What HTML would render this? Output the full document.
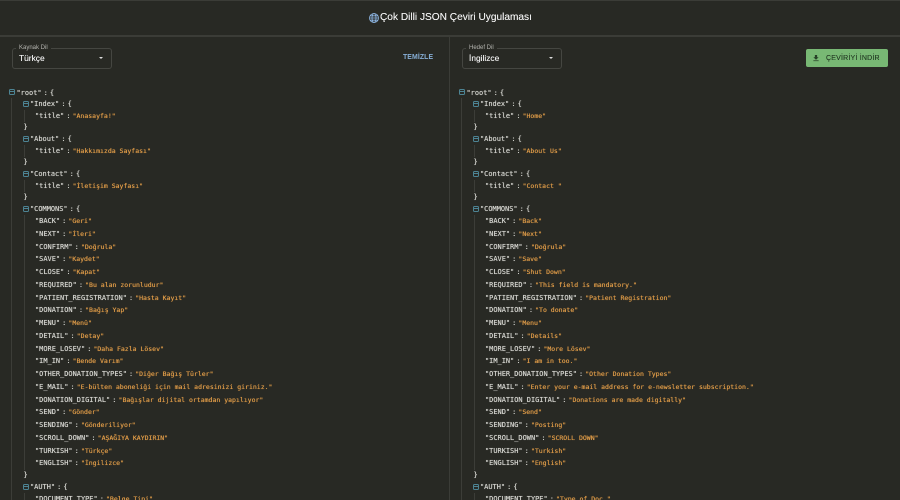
<!DOCTYPE html>
<html lang="tr"><head><meta charset="utf-8"><title>Çok Dilli JSON Çeviri Uygulaması</title>
<style>
html,body{margin:0;padding:0;width:900px;height:500px;overflow:hidden;background:#282924}
body{position:relative;font-family:"Liberation Sans",sans-serif;color:#fff}
.hl{position:absolute;left:0;width:900px;height:2px;background:#3b3c37}
.title{position:absolute;left:380px;top:10.5px;font-size:10.15px;line-height:14px;color:#f0f0f0;white-space:nowrap;text-shadow:0 0 .3px #f0f0f0}
.globe{position:absolute;left:369px;top:13px}
.div{position:absolute;left:449px;top:36px;width:1px;height:464px;background:#3b3c37}
.p{position:absolute;top:0;width:450px;height:500px;overflow:hidden}
.sel{position:absolute;left:12px;top:48px;width:98px;height:19px;border:1px solid #454641;border-radius:3px}
.lab{position:absolute;left:16px;top:44.5px;padding:0 3px;background:#282924;font-size:6px;line-height:7px;color:#b5b5b0;white-space:nowrap}
.val{position:absolute;left:19px;top:52px;font-size:8.4px;line-height:12px;color:#f0f0f0;white-space:nowrap;text-shadow:0 0 .3px #f0f0f0}
.arr{position:absolute;left:99px;top:57px;width:0;height:0;border-left:2.6px solid transparent;border-right:2.6px solid transparent;border-top:2.8px solid #ddd}
.clr{position:absolute;left:403px;top:53px;font-size:6.9px;line-height:10px;color:#86aed6;white-space:nowrap;font-weight:bold;letter-spacing:.1px}
.btn{position:absolute;left:356px;top:49px;width:82px;height:18px;border-radius:2px;background:#78b874}
.btn span{position:absolute;left:20px;top:4.5px;font-size:7px;line-height:10px;color:#274027;white-space:nowrap;letter-spacing:.2px;text-shadow:0 0 .3px #274027}
.btn svg{position:absolute;left:7px;top:4px}
.v{position:absolute;width:1px;background:#3c3d38}
.r{position:absolute;white-space:pre;height:12px;line-height:12px;font-family:"DejaVu Sans Mono","Liberation Mono",monospace;font-size:6.95px;color:#d4d4cf;text-shadow:0 0 .5px #d4d4cf}
.r b{font-weight:normal;font-size:6.5px;color:#e09c48;text-shadow:0 0 .5px #e09c48}
.r u{text-decoration:none;word-spacing:-2.1px}
.a{left:16.5px}.c{left:30px}.d{left:35px}.e{left:23.5px}
.m{position:absolute;width:4px;height:4px;border:1px solid #4d8494;border-radius:1.5px;box-sizing:content-box}
.m:after{content:"";position:absolute;left:0;right:0;top:1.5px;height:1px;background:#4d8494}
</style></head><body>
<div class="hl" style="top:0;height:1px"></div>
<div class="hl" style="top:35px"></div>
<svg class="globe" width="10" height="10" viewBox="0 0 10 10" fill="none" stroke="#8fb8e6" stroke-width=".8"><circle cx="5" cy="5" r="4.5"/><ellipse cx="5" cy="5" rx="2" ry="4.5"/><path d="M.5 5h9M1.2 2.8h7.6M1.2 7.2h7.6"/></svg>
<div class="title">Çok Dilli JSON Çeviri Uygulaması</div>
<div class="div"></div>

<div class="p" style="left:0">
<div class="sel"></div><div class="lab">Kaynak Dil</div><div class="val">Türkçe</div><div class="arr"></div>
<div class="clr">TEMİZLE</div>
<div class="v" style="left:11px;top:98px;height:402px"></div>
<div class="v" style="left:24px;top:110px;height:12px"></div>
<div class="v" style="left:24px;top:145px;height:12px"></div>
<div class="v" style="left:24px;top:180px;height:12px"></div>
<div class="v" style="left:24px;top:215px;height:255px"></div>
<div class="v" style="left:24px;top:493px;height:7px"></div>
<div class="m" style="left:8.5px;top:88.5px"></div><div class="m" style="left:22.5px;top:100.5px"></div><div class="m" style="left:22.5px;top:135.5px"></div><div class="m" style="left:22.5px;top:170.5px"></div><div class="m" style="left:22.5px;top:205.5px"></div><div class="m" style="left:22.5px;top:483.5px"></div>
<div class="r a" style="top:87px">"root"<u> : </u>{</div>
<div class="r c" style="top:98px">"Index"<u> : </u>{</div>
<div class="r d" style="top:109.5px">"title"<u> : </u><b>"Anasayfa!"</b></div>
<div class="r e" style="top:121px">}</div>
<div class="r c" style="top:133px">"About"<u> : </u>{</div>
<div class="r d" style="top:144.5px">"title"<u> : </u><b>"Hakkımızda Sayfası"</b></div>
<div class="r e" style="top:156px">}</div>
<div class="r c" style="top:168px">"Contact"<u> : </u>{</div>
<div class="r d" style="top:179.5px">"title"<u> : </u><b>"İletişim Sayfası"</b></div>
<div class="r e" style="top:191px">}</div>
<div class="r c" style="top:203px">"COMMONS"<u> : </u>{</div>
<div class="r d" style="top:215px">"BACK"<u> : </u><b>"Geri"</b></div>
<div class="r d" style="top:227.7px">"NEXT"<u> : </u><b>"İleri"</b></div>
<div class="r d" style="top:240.5px">"CONFIRM"<u> : </u><b>"Doğrula"</b></div>
<div class="r d" style="top:253.2px">"SAVE"<u> : </u><b>"Kaydet"</b></div>
<div class="r d" style="top:266px">"CLOSE"<u> : </u><b>"Kapat"</b></div>
<div class="r d" style="top:278.7px">"REQUIRED"<u> : </u><b>"Bu alan zorunludur"</b></div>
<div class="r d" style="top:291.5px">"PATIENT_REGISTRATION"<u> : </u><b>"Hasta Kayıt"</b></div>
<div class="r d" style="top:304.2px">"DONATION"<u> : </u><b>"Bağış Yap"</b></div>
<div class="r d" style="top:317px">"MENU"<u> : </u><b>"Menü"</b></div>
<div class="r d" style="top:329.7px">"DETAIL"<u> : </u><b>"Detay"</b></div>
<div class="r d" style="top:342.5px">"MORE_LOSEV"<u> : </u><b>"Daha Fazla Lösev"</b></div>
<div class="r d" style="top:355.2px">"IM_IN"<u> : </u><b>"Bende Varım"</b></div>
<div class="r d" style="top:368px">"OTHER_DONATION_TYPES"<u> : </u><b>"Diğer Bağış Türler"</b></div>
<div class="r d" style="top:380.7px">"E_MAIL"<u> : </u><b>"E-bülten aboneliği için mail adresinizi giriniz."</b></div>
<div class="r d" style="top:393.5px">"DONATION_DIGITAL"<u> : </u><b>"Bağışlar dijital ortamdan yapılıyor"</b></div>
<div class="r d" style="top:406.2px">"SEND"<u> : </u><b>"Gönder"</b></div>
<div class="r d" style="top:419px">"SENDING"<u> : </u><b>"Gönderiliyor"</b></div>
<div class="r d" style="top:431.7px">"SCROLL_DOWN"<u> : </u><b>"AŞAĞIYA KAYDIRIN"</b></div>
<div class="r d" style="top:444.5px">"TURKISH"<u> : </u><b>"Türkçe"</b></div>
<div class="r d" style="top:457.2px">"ENGLISH"<u> : </u><b>"İngilizce"</b></div>
<div class="r e" style="top:469px">}</div>
<div class="r c" style="top:481px">"AUTH"<u> : </u>{</div>
<div class="r d" style="top:492.7px">"DOCUMENT_TYPE"<u> : </u><b>"Belge Tipi"</b></div>
</div>

<div class="p" style="left:450px">
<div class="sel"></div><div class="lab">Hedef Dil</div><div class="val">İngilizce</div><div class="arr"></div>
<div class="btn"><svg width="6" height="10" viewBox="0 0 8 10" fill="#274027"><path d="M2.5 1h3v3h2L4 7.4.5 4h2zM.5 8.2h7v1h-7z"/></svg><span>ÇEVİRİYİ İNDİR</span></div>
<div class="v" style="left:11px;top:98px;height:402px"></div>
<div class="v" style="left:24px;top:110px;height:12px"></div>
<div class="v" style="left:24px;top:145px;height:12px"></div>
<div class="v" style="left:24px;top:180px;height:12px"></div>
<div class="v" style="left:24px;top:215px;height:255px"></div>
<div class="v" style="left:24px;top:493px;height:7px"></div>
<div class="m" style="left:8.5px;top:88.5px"></div><div class="m" style="left:22.5px;top:100.5px"></div><div class="m" style="left:22.5px;top:135.5px"></div><div class="m" style="left:22.5px;top:170.5px"></div><div class="m" style="left:22.5px;top:205.5px"></div><div class="m" style="left:22.5px;top:483.5px"></div>
<div class="r a" style="top:87px">"root"<u> : </u>{</div>
<div class="r c" style="top:98px">"Index"<u> : </u>{</div>
<div class="r d" style="top:109.5px">"title"<u> : </u><b>"Home"</b></div>
<div class="r e" style="top:121px">}</div>
<div class="r c" style="top:133px">"About"<u> : </u>{</div>
<div class="r d" style="top:144.5px">"title"<u> : </u><b>"About Us"</b></div>
<div class="r e" style="top:156px">}</div>
<div class="r c" style="top:168px">"Contact"<u> : </u>{</div>
<div class="r d" style="top:179.5px">"title"<u> : </u><b>"Contact "</b></div>
<div class="r e" style="top:191px">}</div>
<div class="r c" style="top:203px">"COMMONS"<u> : </u>{</div>
<div class="r d" style="top:215px">"BACK"<u> : </u><b>"Back"</b></div>
<div class="r d" style="top:227.7px">"NEXT"<u> : </u><b>"Next"</b></div>
<div class="r d" style="top:240.5px">"CONFIRM"<u> : </u><b>"Doğrula"</b></div>
<div class="r d" style="top:253.2px">"SAVE"<u> : </u><b>"Save"</b></div>
<div class="r d" style="top:266px">"CLOSE"<u> : </u><b>"Shut Down"</b></div>
<div class="r d" style="top:278.7px">"REQUIRED"<u> : </u><b>"This field is mandatory."</b></div>
<div class="r d" style="top:291.5px">"PATIENT_REGISTRATION"<u> : </u><b>"Patient Registration"</b></div>
<div class="r d" style="top:304.2px">"DONATION"<u> : </u><b>"To donate"</b></div>
<div class="r d" style="top:317px">"MENU"<u> : </u><b>"Menu"</b></div>
<div class="r d" style="top:329.7px">"DETAIL"<u> : </u><b>"Details"</b></div>
<div class="r d" style="top:342.5px">"MORE_LOSEV"<u> : </u><b>"More Lösev"</b></div>
<div class="r d" style="top:355.2px">"IM_IN"<u> : </u><b>"I am in too."</b></div>
<div class="r d" style="top:368px">"OTHER_DONATION_TYPES"<u> : </u><b>"Other Donation Types"</b></div>
<div class="r d" style="top:380.7px">"E_MAIL"<u> : </u><b>"Enter your e-mail address for e-newsletter subscription."</b></div>
<div class="r d" style="top:393.5px">"DONATION_DIGITAL"<u> : </u><b>"Donations are made digitally"</b></div>
<div class="r d" style="top:406.2px">"SEND"<u> : </u><b>"Send"</b></div>
<div class="r d" style="top:419px">"SENDING"<u> : </u><b>"Posting"</b></div>
<div class="r d" style="top:431.7px">"SCROLL_DOWN"<u> : </u><b>"SCROLL DOWN"</b></div>
<div class="r d" style="top:444.5px">"TURKISH"<u> : </u><b>"Turkish"</b></div>
<div class="r d" style="top:457.2px">"ENGLISH"<u> : </u><b>"English"</b></div>
<div class="r e" style="top:469px">}</div>
<div class="r c" style="top:481px">"AUTH"<u> : </u>{</div>
<div class="r d" style="top:492.7px">"DOCUMENT_TYPE"<u> : </u><b>"Type of Doc."</b></div>
</div>
</body></html>
